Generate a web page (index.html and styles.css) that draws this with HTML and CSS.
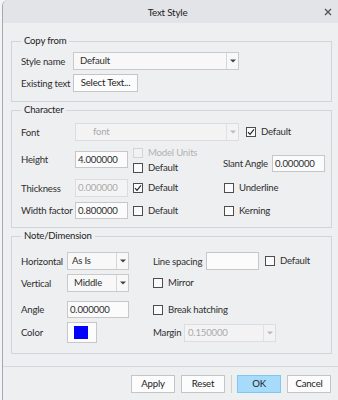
FILE: index.html
```html
<!DOCTYPE html>
<html>
<head>
<meta charset="utf-8">
<title>Text Style</title>
<link rel="stylesheet" href="styles.css">
</head>
<body>
<div class="dialog">
  <div class="titlebar">
    <span></span>
    <span class="title">Text Style</span>
    <span class="close"><svg width="8" height="8" viewBox="0 0 8 8"><path d="M1 1L7 7M7 1L1 7" stroke="#555" stroke-width="1.4"/></svg></span>
  </div>
  <div class="content">
    <fieldset class="group copy">
      <legend>Copy from</legend>
      <div class="row">
        <span class="lbl lc">Style name</span>
        <div class="select w-style"><span class="val">Default</span><span class="arrow"><svg width="6" height="4" viewBox="0 0 6 4"><path d="M0 0.5H6L3 3.5Z" fill="#444"/></svg></span></div>
      </div>
      <div class="row mt4">
        <span class="lbl lc">Existing text</span>
        <button class="btn w-selbtn">Select Text...</button>
      </div>
    </fieldset>

    <fieldset class="group char">
      <legend>Character</legend>
      <div class="row">
        <span class="lbl lch">Font</span>
        <div class="select dis w-font"><span class="val font-val">font</span><span class="arrow"><svg width="6" height="4" viewBox="0 0 6 4"><path d="M0 0.5H6L3 3.5Z" fill="#bbb"/></svg></span></div>
        <label class="check ml7"><span class="cb"><svg width="8" height="8" viewBox="0 0 8 8"><path d="M1 4.2L3 6.3L7 1.3" fill="none" stroke="#222" stroke-width="1.1"/></svg></span>Default</label>
      </div>
      <div class="row r2 mt7">
        <span class="lbl lch mt3">Height</span>
        <span class="input w53 mt3">4.000000</span>
        <div class="stack">
          <label class="check dis"><span class="cb"></span>Model Units</label>
          <label class="check mt5"><span class="cb"></span>Default</label>
        </div>
        <div class="slant"><span class="lbl w49">Slant Angle</span><span class="input w53">0.000000</span></div>
      </div>
      <div class="row mt7">
        <span class="lbl lch">Thickness</span>
        <span class="input dis w53 h18">0.000000</span>
        <label class="check col3"><span class="cb"><svg width="8" height="8" viewBox="0 0 8 8"><path d="M1 4.2L3 6.3L7 1.3" fill="none" stroke="#222" stroke-width="1.1"/></svg></span>Default</label>
        <label class="check ml1"><span class="cb"></span>Underline</label>
      </div>
      <div class="row h17 mt5">
        <span class="lbl lch">Width factor</span>
        <span class="input w53">0.800000</span>
        <label class="check col3"><span class="cb"></span>Default</label>
        <label class="check ml1"><span class="cb"></span>Kerning</label>
      </div>
    </fieldset>

    <fieldset class="group note">
      <legend>Note/Dimension</legend>
      <div class="row">
        <span class="lbl ln">Horizontal</span>
        <div class="select w62 h17"><span class="val">As Is</span><span class="arrow"><svg width="6" height="4" viewBox="0 0 6 4"><path d="M0 0.5H6L3 3.5Z" fill="#444"/></svg></span></div>
        <span class="lbl ml24 w53">Line spacing</span>
        <span class="input w53 h18"></span>
        <label class="check ml6"><span class="cb"></span>Default</label>
      </div>
      <div class="row mt4">
        <span class="lbl ln">Vertical</span>
        <div class="select w62"><span class="val">Middle</span><span class="arrow"><svg width="6" height="4" viewBox="0 0 6 4"><path d="M0 0.5H6L3 3.5Z" fill="#444"/></svg></span></div>
        <label class="check ml24"><span class="cb"></span>Mirror</label>
      </div>
      <div class="row h17 mt9">
        <span class="lbl ln">Angle</span>
        <span class="input w62">0.000000</span>
        <label class="check ml24"><span class="cb"></span>Break hatching</label>
      </div>
      <div class="row h21 mt4">
        <span class="lbl ln">Color</span>
        <span class="colorbtn"><span class="swatch"></span></span>
        <span class="lbl ml56 w31">Margin</span>
        <div class="select dis w92 h17"><span class="val margin-val">0.150000</span><span class="arrow"><svg width="6" height="4" viewBox="0 0 6 4"><path d="M0 0.5H6L3 3.5Z" fill="#bbb"/></svg></span></div>
      </div>
    </fieldset>
  </div>
  <div class="footer">
    <button class="btn fbtn">Apply</button>
    <button class="btn fbtn">Reset</button>
    <span class="vsep"></span>
    <button class="btn fbtn ok">OK</button>
    <button class="btn fbtn">Cancel</button>
  </div>
</div>
</body>
</html>
```

FILE: styles.css
```css
* { box-sizing: border-box; }
html, body { margin: 0; padding: 0; }
body {
  width: 338px;
  height: 400px;
  overflow: hidden;
  background: #f3f3f4;
  font-family: Lato, "Noto Sans", sans-serif;
  font-size: 9.6px;
  letter-spacing: -0.2px;
  color: #2e2e2e;
}
.dialog {
  margin-left: 2px;
  height: 400px;
  border-left: 1px solid #a7a5b8;
  border-top-left-radius: 6px;
  background: #eeeff1;
  overflow: hidden;
}
.titlebar {
  height: 23px;
  background: #e2e4e7;
  display: grid;
  grid-template-columns: 1fr auto 1fr;
  align-items: center;
  padding-right: 6px;
}
.title { color: #222; font-size: 9.8px; }
.close { justify-self: end; display: flex; }
.content { padding: 12px 6px 0 8px; }
.group {
  margin: 0;
  border: 1px solid #d2d4d7;
  padding: 5px 5px 9px 9px;
  min-width: 0;
}
.group legend {
  padding: 0 3px;
  line-height: 12px;
  color: #222;
}
.char { margin-top: 2px; padding-top: 7px; padding-bottom: 8px; }
.note { margin-top: 2px; padding-top: 10px; padding-bottom: 10px; }

.row { display: flex; align-items: center; height: 18px; }
.row.r2 { align-items: flex-start; height: 24px; }
.h17 { height: 17px; }
.h18 { height: 18px; }
.h21 { height: 21px; }
.mt3 { margin-top: 3px; }
.mt4 { margin-top: 4px; }
.mt5 { margin-top: 5px; }
.mt7 { margin-top: 7px; }
.mt9 { margin-top: 9px; }
.ml1 { margin-left: 1px; }
.ml6 { margin-left: 6px; }
.ml7 { margin-left: 7px; }
.ml24 { margin-left: 24px; }
.ml56 { margin-left: 56px; }

.lbl { white-space: nowrap; flex: none; line-height: 17px; }
.lc { width: 52px; }
.lch { width: 54px; }
.ln { width: 46px; }
.w31 { width: 31px; }
.w49 { width: 49px; }
.w53 { width: 53px; }
.w62 { width: 62px; }
.w92 { width: 92px; }
.w-style { width: 166px; }
.w-font { width: 164px; }
.w-selbtn { width: 65px; height: 18px; }

.select {
  display: flex;
  flex: none;
  height: 18px;
  border: 1px solid #c9cacd;
  background: #f8f8f8;
}
.select .val { flex: 1; padding-left: 6px; line-height: 16px; white-space: nowrap; }
.select.h17 .val { line-height: 15px; padding-left: 4px; }
.select .arrow {
  width: 12px;
  border-left: 1px solid #d6d7d9;
  display: flex;
  align-items: center;
  justify-content: center;
}
.select.dis { border-color: #dcdde0; background: #f3f3f4; color: #aaa; }
.select.dis .arrow { border-left-color: #e0e1e3; }
.font-val { padding-left: 17px !important; }
.margin-val { padding-left: 3px !important; }

.input {
  display: block;
  flex: none;
  height: 17px;
  border: 1px solid #c6c7ca;
  background: #fbfbfb;
  padding-left: 2px;
  line-height: 15px;
  white-space: nowrap;
}
.input.h18 { height: 18px; line-height: 16px; }
.input.dis { border-color: #dcdde0; background: #f4f4f5; color: #aaa; }

.check {
  display: flex;
  align-items: center;
  gap: 5px;
  white-space: nowrap;
  line-height: 10px;
  flex: none;
}
.cb {
  width: 10px;
  height: 10px;
  flex: none;
  border: 1px solid #4d4d4d;
  background: #fbfbfb;
  display: flex;
  align-items: center;
  justify-content: center;
}
.check.dis { color: #b2b2b2; }
.check.dis .cb { border-color: #d4d4d6; background: #f2f2f3; }
.stack { margin-left: 5px; width: 90px; display: flex; flex-direction: column; flex: none; }
.slant { margin-top: 7px; display: flex; align-items: center; height: 17px; }
.col3 { margin-left: 5px; width: 90px; }

.btn {
  font: inherit;
  letter-spacing: inherit;
  color: #222;
  border: 1px solid #c4c5c8;
  background: #fcfcfc;
  padding: 0;
  margin: 0;
  height: 18px;
  line-height: 16px;
  text-align: center;
  flex: none;
}
.colorbtn {
  width: 30px;
  height: 21px;
  flex: none;
  border: 1px solid #c6c7ca;
  background: #fcfcfc;
  padding: 3px 0 0 6px;
}
.swatch { display: block; width: 14px; height: 13px; background: #0000ff; }

.footer {
  margin-top: 12px;
  border-top: 1px solid #d7d8db;
  padding: 8px 7px 0 0;
  display: flex;
  justify-content: flex-end;
  gap: 6px;
}
.fbtn { width: 44px; }
.vsep { width: 1px; height: 18px; background: #cfd0d3; margin-right: -1px; }
.ok { background: #a7dbfb; border-color: #7fc6f2; }
```
